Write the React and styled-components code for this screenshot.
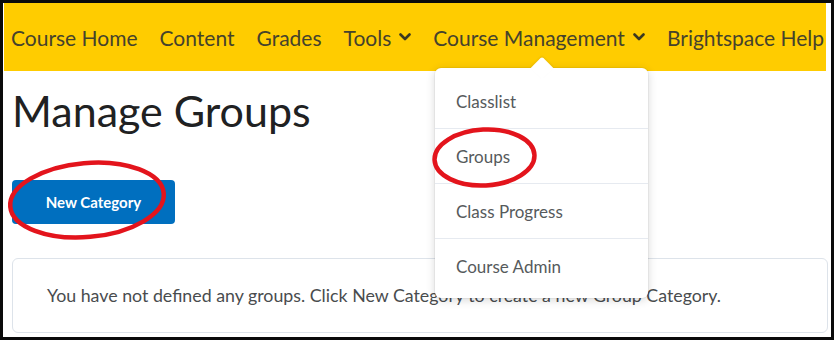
import React from 'react';
import styled, { createGlobalStyle } from 'styled-components';

const GlobalStyle = createGlobalStyle`
  html, body {
    margin: 0;
    padding: 0;
    background: #fff;
  }
  body {
    font-family: Lato, "Open Sans", sans-serif;
  }
`;

const Frame = styled.div`
  position: relative;
  width: 834px;
  height: 340px;
  box-sizing: border-box;
  border: 3px solid #0a0a0a;
  overflow: hidden;
  background: #fff;
`;

const NavBar = styled.nav`
  display: flex;
  align-items: center;
  gap: 22px;
  height: 68px;
  margin: 0 5px 0 1px;
  padding-left: 7px;
  background: #ffcc00;
`;

const NavItem = styled.div`
  display: flex;
  align-items: center;
  gap: 8px;
  font-size: 21px;
  color: #45422c;
  white-space: nowrap;
`;

const Chevron = () => (
  <svg width="12" height="8" viewBox="0 0 12 8">
    <polyline points="1.5,1.5 6,6 10.5,1.5" fill="none" stroke="#3a3820" strokeWidth="2.6" strokeLinecap="round" strokeLinejoin="round" />
  </svg>
);

const Content = styled.main`
  display: flex;
  flex-direction: column;
  align-items: flex-start;
  padding: 0 3px 0 9px;
`;

const Title = styled.h1`
  margin: 14px 0 0 0;
  font-size: 43px;
  font-weight: 400;
  line-height: 52px;
  color: #202122;
`;

const PrimaryButton = styled.button`
  margin-top: 43px;
  width: 163px;
  height: 44px;
  border: none;
  border-radius: 4px;
  background: #006fbf;
  color: #fff;
  font-family: Lato, sans-serif;
  font-size: 15px;
  font-weight: 700;
`;

const Card = styled.section`
  box-sizing: border-box;
  align-self: stretch;
  margin-top: 34px;
  height: 75px;
  padding: 26px 0 0 34px;
  border: 1px solid #dde3ea;
  border-radius: 6px;
  font-size: 17.8px;
  line-height: 21px;
  color: #494c4e;
  white-space: nowrap;
`;

const Menu = styled.ul`
  position: absolute;
  left: 432px;
  top: 65px;
  z-index: 2;
  width: 213px;
  margin: 0;
  padding: 6px 0 4px;
  list-style: none;
  background: #fff;
  border-radius: 6px;
  box-shadow: 0 2px 10px rgba(0, 0, 0, 0.16), 0 0 0 1px rgba(0, 0, 0, 0.04);

  &::before {
    content: '';
    position: absolute;
    left: 99px;
    top: -8px;
    width: 16px;
    height: 16px;
    background: #fff;
    border-radius: 2px 0 0 0;
    transform: rotate(45deg);
    box-shadow: -1px -1px 2px rgba(0, 0, 0, 0.07);
  }
`;

const MenuItem = styled.li`
  position: relative;
  display: flex;
  align-items: center;
  height: 55px;
  box-sizing: border-box;
  padding-left: 21px;
  font-size: 17px;
  color: #565a5c;
  border-bottom: ${(p) => (p.last ? 'none' : '1px solid #e6eaf0')};
`;

const Annotation = styled.svg`
  position: absolute;
  left: 0;
  top: 0;
  z-index: 3;
  pointer-events: none;
`;

const navItems = [
  { label: 'Course Home' },
  { label: 'Content' },
  { label: 'Grades' },
  { label: 'Tools', menu: true },
  { label: 'Course Management', menu: true },
  { label: 'Brightspace Help' },
];

const menuItems = ['Classlist', 'Groups', 'Class Progress', 'Course Admin'];

export default function App() {
  return (
    <>
      <GlobalStyle />
      <Frame>
        <NavBar>
          {navItems.map((item) => (
            <NavItem key={item.label}>
              {item.label}
              {item.menu && <Chevron />}
            </NavItem>
          ))}
        </NavBar>
        <Content>
          <Title>Manage Groups</Title>
          <PrimaryButton>New Category</PrimaryButton>
          <Card>
            You have not defined any groups. Click New Category to create a new Group Category.
          </Card>
        </Content>
        <Menu>
          {menuItems.map((m, i) => (
            <MenuItem key={m} last={i === menuItems.length - 1}>
              {m}
            </MenuItem>
          ))}
        </Menu>
        <Annotation width="828" height="334" viewBox="3 3 828 334">
          <ellipse cx="87" cy="200" rx="77" ry="37" fill="none" stroke="#e3141c" strokeWidth="4.5" transform="rotate(-5 87 200)" />
          <ellipse cx="484.5" cy="157.5" rx="50" ry="28" fill="none" stroke="#e3141c" strokeWidth="4.5" transform="rotate(-3 484.5 157.5)" />
        </Annotation>
      </Frame>
    </>
  );
}
